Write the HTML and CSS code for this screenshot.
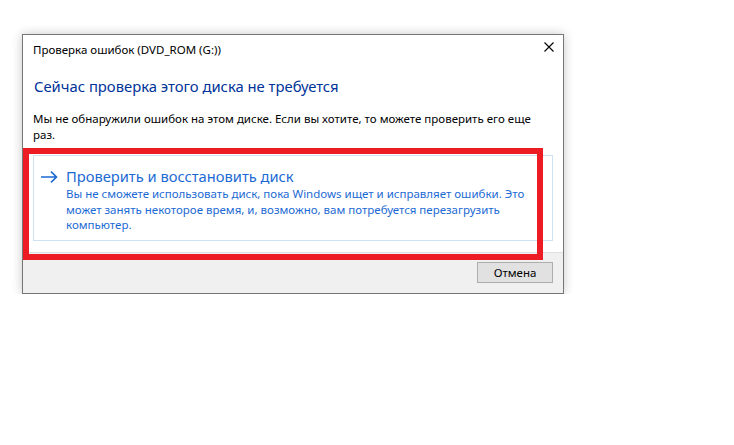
FILE: index.html
```html
<!DOCTYPE html>
<html lang="ru">
<head>
<meta charset="utf-8">
<link rel="stylesheet" href="styles.css">
</head>
<body>
<div class="window">
  <div class="titlebar">
    <span class="title">Проверка ошибок (DVD_ROM (G:))</span>
    <svg class="close" width="10" height="10" viewBox="0 0 10 10"><path d="M0.5 0.5L9.5 9.5M9.5 0.5L0.5 9.5" stroke="#000" stroke-width="1.1" fill="none"/></svg>
  </div>
  <div class="content">
    <div class="heading">Сейчас проверка этого диска не требуется</div>
    <p class="body-text">Мы не обнаружили ошибок на этом диске. Если вы хотите, то можете проверить его еще раз.</p>
    <div class="command">
      <svg class="arrow" width="17" height="12" viewBox="0 0 17 12"><path d="M0 6H15.5M10 0.6L15.5 6L10 11.4" stroke="#1c6ad4" stroke-width="1.6" fill="none"/></svg>
      <div class="command-text">
        <div class="command-title">Проверить и восстановить диск</div>
        <div class="command-desc">Вы не сможете использовать диск, пока Windows ищет и исправляет ошибки. Это может занять некоторое время, и, возможно, вам потребуется перезагрузить компьютер.</div>
      </div>
    </div>
  </div>
  <div class="footer">
    <button class="btn">Отмена</button>
  </div>
</div>
<div class="highlight"></div>
</body>
</html>
```
FILE: styles.css
```css
html, body {
  margin: 0;
  padding: 0;
  background: #ffffff;
}
body {
  font-family: "Noto Sans", "Open Sans", sans-serif;
  font-size: 11.5px;
  color: #000;
  padding-top: 34px;
  padding-left: 22px;
}
.window {
  width: 540px;
  height: 258px;
  border: 1px solid #767676;
  box-shadow: 0 0 10px rgba(0, 0, 0, 0.22);
  background: #fff;
  display: flex;
  flex-direction: column;
}
.titlebar {
  height: 30px;
  flex: none;
  display: flex;
  justify-content: space-between;
  align-items: flex-start;
  padding: 7px 9px 0 10px;
  box-sizing: border-box;
}
.title {
  line-height: 16px;
  font-size: 11.5px;
}
.content {
  flex: 1;
  padding: 11px 10px 0 10px;
}
.heading {
  font-size: 14.8px;
  line-height: 20px;
  color: #003399;
  padding-left: 1px;
}
.body-text {
  margin: 15px 0 0 0;
  line-height: 16px;
  padding-right: 8px;
}
.command {
  margin-top: 12px;
  border: 1px solid #cfe2f4;
  height: 86px;
  box-sizing: border-box;
  display: flex;
  align-items: flex-start;
  padding: 11px 20px 0 7px;
}
.arrow {
  flex: none;
  margin-top: 4px;
  margin-right: 8px;
}
.command-text {
  color: #1c6ad4;
}
.command-title {
  font-size: 14.7px;
  line-height: 19px;
}
.command-desc {
  line-height: 15.5px;
  font-size: 11.5px;
}
.footer {
  height: 41px;
  flex: none;
  box-sizing: border-box;
  border-top: 1px solid #dfdfdf;
  background: #f0f0f0;
  display: flex;
  justify-content: flex-end;
  align-items: flex-start;
  padding: 9px 10px 0 0;
}
.btn {
  width: 76px;
  height: 21px;
  background: #e1e1e1;
  border: 1px solid #adadad;
  font-family: "Noto Sans", "Open Sans", sans-serif;
  font-size: 11.5px;
  color: #000;
  padding: 0;
  line-height: 18px;
}
.highlight {
  position: absolute;
  left: 23px;
  top: 148px;
  width: 508px;
  height: 100px;
  border: 6px solid #ed1c24;
}
```
